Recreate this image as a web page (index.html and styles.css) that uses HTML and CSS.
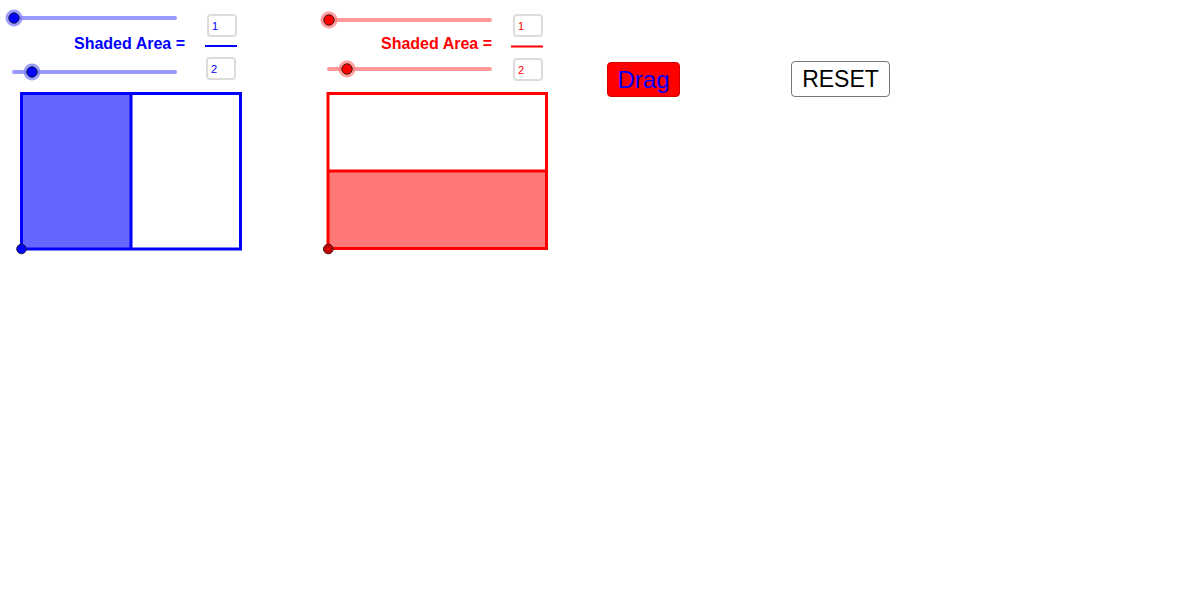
FILE: index.html
```html
<!DOCTYPE html>
<html>
<head>
<meta charset="utf-8">
<link rel="stylesheet" href="styles.css">
</head>
<body>
<div class="canvas">
  <svg class="drawing" width="1194" height="608" viewBox="0 0 1194 608">
    <!-- blue sliders -->
    <line x1="15" y1="18" x2="175" y2="18" class="track-blue"/>
    <circle cx="14" cy="18" r="8.5" class="halo-blue"/>
    <circle cx="14" cy="18" r="5.2" class="knob-blue"/>
    <line x1="14" y1="72" x2="175" y2="72" class="track-blue"/>
    <circle cx="32" cy="72" r="8.5" class="halo-blue"/>
    <circle cx="32" cy="72" r="5.2" class="knob-blue"/>
    <!-- blue fraction bar -->
    <line x1="205" y1="46" x2="237" y2="46" class="frac-blue"/>
    <!-- blue rectangle -->
    <rect x="21.5" y="93.5" width="109.5" height="155.5" class="fill-blue"/>
    <rect x="21.5" y="93.5" width="219" height="155.5" class="stroke-blue"/>
    <line x1="131" y1="93.5" x2="131" y2="249" class="stroke-blue"/>
    <circle cx="21.5" cy="249" r="4.8" class="pt-blue"/>

    <!-- red sliders -->
    <line x1="330" y1="20" x2="490" y2="20" class="track-red"/>
    <circle cx="329" cy="20" r="8.5" class="halo-red"/>
    <circle cx="329" cy="20" r="5.2" class="knob-red"/>
    <line x1="329" y1="69" x2="490" y2="69" class="track-red"/>
    <circle cx="347" cy="69" r="8.5" class="halo-red"/>
    <circle cx="347" cy="69" r="5.2" class="knob-red"/>
    <!-- red fraction bar -->
    <line x1="511" y1="46.5" x2="543" y2="46.5" class="frac-red"/>
    <!-- red rectangle -->
    <rect x="328" y="171" width="218.5" height="77.5" class="fill-red"/>
    <rect x="328" y="93.5" width="218.5" height="155" class="stroke-red"/>
    <line x1="328" y1="171" x2="546.5" y2="171" class="stroke-red"/>
    <circle cx="328.3" cy="249" r="4.8" class="pt-red"/>
    <circle cx="328.3" cy="249" r="2.4" class="pt-red-inner"/>
  </svg>

  <div class="label label-blue">Shaded Area =</div>
  <div class="numbox box-blue box-b1">1</div>
  <div class="numbox box-blue box-b2">2</div>

  <div class="label label-red">Shaded Area =</div>
  <div class="numbox box-red box-r1">1</div>
  <div class="numbox box-red box-r2">2</div>

  <button class="btn btn-drag">Drag</button>
  <button class="btn btn-reset">RESET</button>
</div>
</body>
</html>
```
FILE: styles.css
```css
html, body {
  margin: 0;
  padding: 0;
  background: #ffffff;
}

.canvas {
  position: relative;
  width: 1194px;
  height: 608px;
  overflow: hidden;
  font-family: "Liberation Sans", Arial, sans-serif;
}

.drawing {
  position: absolute;
  left: 0;
  top: 0;
}

.track-blue { stroke: #9999ff; stroke-width: 4; stroke-linecap: round; }
.halo-blue { fill: #7d7dff; opacity: 0.75; }
.knob-blue { fill: #0000ff; stroke: #1a1a40; stroke-width: 1; }
.frac-blue { stroke: #0000ff; stroke-width: 2; }
.fill-blue { fill: #6666ff; }
.stroke-blue { fill: none; stroke: #0000ff; stroke-width: 3; }
.pt-blue { fill: #0000ff; stroke: #222244; stroke-width: 1; }

.track-red { stroke: #ff9999; stroke-width: 4; stroke-linecap: round; }
.halo-red { fill: #ff7d7d; opacity: 0.75; }
.knob-red { fill: #ff0000; stroke: #401a1a; stroke-width: 1; }
.frac-red { stroke: #ff0000; stroke-width: 2; }
.fill-red { fill: #ff7777; }
.stroke-red { fill: none; stroke: #ff0000; stroke-width: 3; }
.pt-red { fill: #dd0000; stroke: #331111; stroke-width: 1; }
.pt-red-inner { fill: #ff0000; stroke: #331111; stroke-width: 0.6; }

.label {
  position: absolute;
  font-size: 16px;
  font-weight: bold;
  line-height: 18px;
  white-space: nowrap;
}
.label-blue { color: #0000ff; left: 74px; top: 35px; }
.label-red { color: #ff0000; left: 381px; top: 35px; }

.numbox {
  position: absolute;
  box-sizing: border-box;
  width: 30px;
  height: 23px;
  border: 2px solid #dcdcdc;
  border-radius: 4px;
  font-size: 11px;
  line-height: 20px;
  padding-left: 3px;
  background: #ffffff;
}
.box-blue { color: #0000ff; }
.box-red { color: #ff0000; }
.box-b1 { left: 207px; top: 14px; }
.box-b2 { left: 206px; top: 57px; }
.box-r1 { left: 513px; top: 14px; }
.box-r2 { left: 513px; top: 58px; }

.btn {
  position: absolute;
  box-sizing: border-box;
  margin: 0;
  padding: 0;
  font-family: "Liberation Sans", Arial, sans-serif;
  border-radius: 4px;
  text-align: center;
}
.btn-drag {
  left: 607px;
  top: 62px;
  width: 73px;
  height: 35px;
  background: #ff0000;
  border: 1px solid #d40000;
  color: #0000ff;
  font-size: 24px;
  line-height: 31px;
}
.btn-reset {
  left: 791px;
  top: 61px;
  width: 99px;
  height: 36px;
  background: #ffffff;
  border: 1px solid #777777;
  color: #000000;
  font-size: 23px;
  line-height: 33px;
}
```
